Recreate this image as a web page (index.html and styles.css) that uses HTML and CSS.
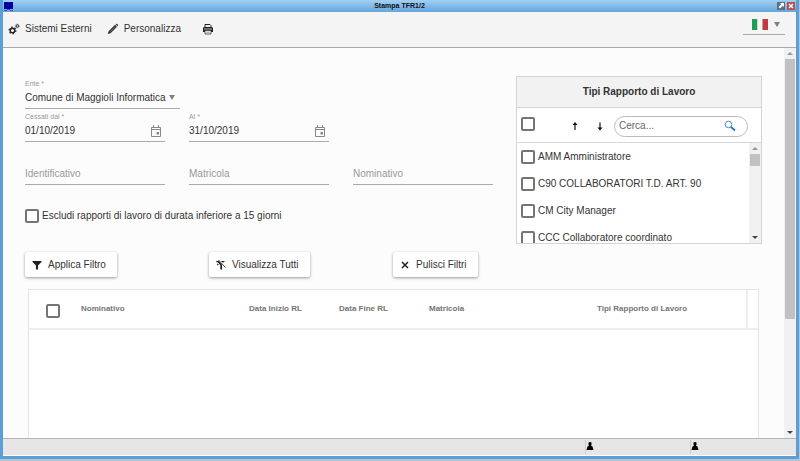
FILE: index.html
```html
<!DOCTYPE html>
<html lang="it">
<head>
<meta charset="utf-8">
<meta name="viewport" content="width=device-width, initial-scale=1">
<title>Stampa TFR1/2</title>
<link rel="stylesheet" href="styles.css">
</head>
<body>
<div class="window">
  <header class="titlebar">
    <svg class="app-icon" viewBox="0 0 9 9" aria-hidden="true"><path fill="#00009c" d="M0 0h4l.5.5L5 0h4v7H0z"/><path fill="#4a4ab8" d="M0 8h3v1H0zM3 7h3v1H3zM6 8h3v1H6z"/></svg>
    <h1>Stampa TFR1/2</h1>
    <div class="window-controls">
      <button type="button" class="win-btn" aria-label="Ingrandisci"><svg viewBox="0 0 8 8"><path fill="#fff" d="M3 1h4v4L5.800 3.800 3 6.500 1.500 5l2.700-2.700z"/></svg></button>
      <button type="button" class="win-btn win-close" aria-label="Chiudi"><svg viewBox="0 0 8 8"><path fill="none" stroke="#fff" stroke-width="1.500" d="M2 2l4 4M6 2L2 6"/></svg></button>
    </div>
  </header>

  <nav class="toolbar">
    <button type="button" class="tool">
      <svg viewBox="0 0 12 12" aria-hidden="true"><circle cx="4.500" cy="7.500" r="2.300" fill="none" stroke="#222" stroke-width="1.500"/><circle cx="4.500" cy="7.500" r="3.400" fill="none" stroke="#222" stroke-width="1.200" stroke-dasharray="1.500 2.060"/><circle cx="9.300" cy="3" r="1.200" fill="none" stroke="#333" stroke-width="1"/><circle cx="9.300" cy="3" r="2" fill="none" stroke="#333" stroke-width=".7" stroke-dasharray=".8 .77"/></svg>
      Sistemi Esterni
    </button>
    <button type="button" class="tool">
      <svg viewBox="0 0 12 12" aria-hidden="true"><path fill="#333" d="M.8 11l.8-2.800L8 1.800 10 3.800 3.600 10.200zM8.600 1.300l.7-.6c.5-.4 2.300 1.300 1.900 1.900l-.7.700z"/><path stroke="#999" stroke-width=".6" d="M3 8.800l5.200-5.200"/></svg>
      Personalizza
    </button>
    <button type="button" class="tool tool-print" aria-label="Stampa">
      <svg viewBox="0 0 12 12" aria-hidden="true"><path fill="#eee" stroke="#222" d="M3 4.500v-3h5l1 1v2"/><path fill="#222" d="M2 4h8l1 1v4H1V5z"/><path fill="#bbb" d="M2 5.500h8v1H2z"/><path fill="#fff" stroke="#333" stroke-width=".8" d="M3 7.500h6V11H3z"/><path stroke="#777" stroke-width=".7" d="M4 9.200h4"/></svg>
    </button>
    <button type="button" class="language" aria-label="Italiano">
      <svg class="flag" viewBox="0 0 16 11" aria-hidden="true"><path fill="#239b56" d="M0 0h5.500v11H0z"/><path fill="#f4f4f4" d="M5.500 0h5v11h-5z"/><path fill="#c03a41" d="M10.500 0H16v11h-5.500z"/></svg>
      <span class="caret"></span>
    </button>
  </nav>

  <div class="viewport">
    <main class="content">
      <div class="filters">
        <form class="form" id="filters">
          <div class="field field-select">
            <label for="ente">Ente *</label>
            <select id="ente"><option>Comune di Maggioli Informatica</option></select>
          </div>
          <div class="field">
            <label for="dal">Cessati dal *</label>
            <div class="date">
              <input id="dal" type="text" value="01/10/2019">
              <svg viewBox="0 0 12 12" aria-hidden="true"><path fill="none" stroke="#888" d="M1.500 2.500h9v9h-9z"/><path fill="#888" d="M1 4h10v1H1zM3 0h1v3H3zM8 0h1v3H8zM6.500 7H9v2.500H6.500z"/></svg>
            </div>
          </div>
          <div class="field">
            <label for="al">Al *</label>
            <div class="date">
              <input id="al" type="text" value="31/10/2019">
              <svg viewBox="0 0 12 12" aria-hidden="true"><path fill="none" stroke="#888" d="M1.500 2.500h9v9h-9z"/><path fill="#888" d="M1 4h10v1H1zM3 0h1v3H3zM8 0h1v3H8zM6.500 7H9v2.500H6.500z"/></svg>
            </div>
          </div>
          <div class="field first"><input type="text" aria-label="Identificativo" placeholder="Identificativo"></div>
          <div class="field"><input type="text" aria-label="Matricola" placeholder="Matricola"></div>
          <div class="field"><input type="text" aria-label="Nominativo" placeholder="Nominativo"></div>
          <label class="check exclude"><input type="checkbox">Escludi rapporti di lavoro di durata inferiore a 15 giorni</label>
        </form>

        <section class="picker">
          <h2>Tipi Rapporto di Lavoro</h2>
          <div class="picker-tools">
            <input type="checkbox" aria-label="Seleziona tutti">
            <button type="button" class="arrow" aria-label="Ordine crescente"><svg viewBox="0 0 8 10"><path fill="#111" d="M4 1l2.500 3H4.600v5H3.400V4H1.500z"/></svg></button>
            <button type="button" class="arrow" aria-label="Ordine decrescente"><svg viewBox="0 0 8 10"><path fill="#111" d="M4 9.500l2.500-3H4.600v-5H3.400v5H1.500z"/></svg></button>
            <div class="search">
              <input type="text" aria-label="Cerca" placeholder="Cerca...">
              <svg viewBox="0 0 12 12" aria-hidden="true"><circle cx="4.500" cy="4.500" r="3.300" fill="none" stroke="#4a90d9"/><path stroke="#1f73d0" stroke-width="1.800" d="M7 7l4 3.500"/></svg>
            </div>
          </div>
          <div class="picker-body">
            <div class="picker-list">
              <label class="check"><input type="checkbox">AMM Amministratore</label>
              <label class="check"><input type="checkbox">C90 COLLABORATORI T.D. ART. 90</label>
              <label class="check"><input type="checkbox">CM City Manager</label>
              <label class="check"><input type="checkbox">CCC Collaboratore coordinato</label>
            </div>
            <div class="scrollbar" aria-hidden="true"><i class="up"></i><b class="thumb"></b><i class="down"></i></div>
          </div>
        </section>
      </div>

      <div class="actions">
        <div><button type="submit" form="filters" class="action"><svg viewBox="0 0 10 10" aria-hidden="true"><path fill="#222" d="M.5 1h9v1L6 5.500V9.500H4V5.500L.5 2z"/></svg>Applica Filtro</button></div>
        <div><button type="button" class="action"><svg viewBox="0 0 10 10" aria-hidden="true"><path fill="#222" d="M.3 1H3l3 3.800v4.700H4.300V5.300L1.800 2.200H.3zM4.800 1H9L7 2.800zM.8 4.600l1-1 .9.900-1 1z"/><path stroke="#333" stroke-width=".9" d="M2.500 0l7 7.500"/></svg>Visualizza Tutti</button></div>
        <div><button type="reset" form="filters" class="action"><svg viewBox="0 0 10 10" aria-hidden="true"><path stroke="#222" stroke-width="1.500" d="M2 2l6 6M8 2L2 8"/></svg>Pulisci Filtri</button></div>
      </div>

      <div class="results">
        <table>
          <colgroup><col class="c-check"><col class="c-name"><col class="c-date"><col class="c-date"><col class="c-code"><col><col class="c-end"></colgroup>
          <thead>
            <tr>
              <th class="th-check"><input type="checkbox" aria-label="Seleziona tutte le righe"></th>
              <th>Nominativo</th><th>Data Inizio RL</th><th>Data Fine RL</th><th>Matricola</th><th>Tipi Rapporto di Lavoro</th>
              <td class="th-end"></td>
            </tr>
          </thead>
        </table>
      </div>
    </main>
    <div class="scrollbar" aria-hidden="true"><i class="up"></i><b class="thumb"></b><i class="down"></i></div>
  </div>

  <footer class="status">
    <span></span>
    <span class="slot"><svg viewBox="0 0 8 8" aria-hidden="true"><path d="M2.500.5L4 0l1.500.5v2.300L5 3.800l1.500.7L7.500 8H.5l1-3.500L3 3.800l-.5-1z"/></svg></span>
    <span class="slot"><svg viewBox="0 0 8 8" aria-hidden="true"><path d="M2.500.5L4 0l1.500.5v2.300L5 3.800l1.500.7L7.500 8H.5l1-3.500L3 3.800l-.5-1z"/></svg></span>
  </footer>
</div>
</body>
</html>
```
FILE: styles.css
```css
* { box-sizing: border-box; }

body {
  margin: 0;
  padding: 0 1px 2px 0;
  background: #b9c3cc;
  color: #333;
  font: 10px/12px "Liberation Sans", Arial, sans-serif;
}

button, input, select { font: inherit; color: inherit; }
button { border: 0; background: none; padding: 0; }
svg { display: block; flex: none; }

.window {
  display: flex;
  flex-direction: column;
  height: calc(100vh - 2px);
  border: solid #5b9fd8;
  border-width: 0 3px 3px;
  background: #fcfcfc;
}

/* Title bar */
.titlebar {
  display: grid;
  grid-template-columns: 1fr auto 1fr;
  align-items: center;
  flex: none;
  height: 12px;
  background: linear-gradient(#a3d0f4, #64a5dc);
}
.app-icon { width: 9px; height: 9px; margin-left: 1px; }
.titlebar h1 { margin: 0; font-size: 7px; line-height: 10px; color: #111; }
.window-controls { display: flex; justify-content: flex-end; gap: 2px; padding-right: 1px; }
.win-btn { width: 8px; height: 8px; background: #5c6e87; }
.win-close { background: #b64f50; }

/* Toolbar */
.toolbar {
  display: flex;
  align-items: center;
  flex: none;
  height: 36px;
  padding: 0 11px 2px 5px;
  background: #f4f4f4;
  border-bottom: 1px solid #aaa;
}
.tool { display: flex; align-items: center; gap: 5px; margin-right: 15px; }
.tool svg { width: 12px; height: 12px; }
.tool-print { margin-left: 6px; }
.language {
  display: flex;
  align-items: center;
  gap: 6px;
  width: 42px;
  height: 24px;
  margin: 0 0 12px auto;
  padding: 4px 0 0 9px;
  border-bottom: 1px solid #aaa;
}
.flag { width: 16px; height: 11px; }
.caret { border: 3px solid transparent; border-top: 5px solid #808080; border-bottom: 0; }

/* Scrolling area */
.viewport { display: flex; flex: 1; min-height: 0; }
.content {
  display: flex;
  flex-direction: column;
  flex: 1;
  min-width: 0;
  padding: 28px 22px 0;
}

.scrollbar {
  display: flex;
  flex-direction: column;
  align-items: center;
  flex: none;
  width: 12px;
  padding: 4px 1px;
  background: #f1f1f1;
}
.scrollbar i { border: 3px solid transparent; }
.scrollbar .up { border-top: 0; border-bottom-color: #999; }
.scrollbar .down { margin-top: auto; border-bottom: 0; border-top-color: #444; }
.scrollbar .thumb { width: 100%; margin-top: 4px; height: 260px; background: #c1c1c1; }

/* Filter form */
.filters { display: flex; gap: 23px; }
.form {
  display: grid;
  flex: 1;
  grid-template-columns: repeat(3, minmax(0, 1fr));
  grid-template-rows: 33px 33px 43px 1fr;
  column-gap: 24px;
}
.field { display: flex; flex-direction: column; justify-content: flex-end; border-bottom: 1px solid #aaa; }
.field label { font-size: 7px; line-height: 8px; color: #999; }
.field input, .field select {
  width: 100%;
  min-width: 0;
  height: 20px;
  padding: 0 0 1px;
  border: 0;
  background: none;
  outline: 0;
}
.field-select { position: relative; grid-column: 1 / 3; justify-self: start; width: 155px; }
.field-select select { appearance: none; }
.field-select::after {
  content: "";
  position: absolute;
  right: 5px;
  bottom: 8px;
  border: 3px solid transparent;
  border-top: 5px solid #808080;
  border-bottom: 0;
}
.field:nth-child(2), .field.first { grid-column: 1; }
.date { display: flex; align-items: center; padding-right: 3px; }
.date svg { width: 12px; height: 12px; }
::placeholder { color: #999; opacity: 1; }

.check { display: flex; align-items: center; gap: 3px; }
input[type="checkbox"] {
  appearance: none;
  flex: none;
  width: 14px;
  height: 14px;
  margin: 0;
  border: 2px solid #757575;
  border-radius: 2px;
  background: #fff;
}
input[type="checkbox"]:checked { background: #757575; }
.exclude { grid-column: 1 / 4; align-self: start; margin-top: 24px; }

/* Contract type picker */
.picker { flex: none; width: 246px; border: 1px solid #d5d5d5; background: #fff; }
.picker h2 {
  margin: 0;
  background: #f2f2f2;
  border-bottom: 1px solid #d8d8d8;
  font-size: 10px;
  line-height: 30px;
  text-align: center;
}
.picker-tools {
  display: flex;
  align-items: center;
  height: 35px;
  padding: 2px 13px 0 4px;
  border-bottom: 1px solid #d8d8d8;
}
.picker-tools > input { margin: 0 36px 4px 0; }
.arrow { width: 8px; margin-right: 17px; }
.arrow svg { width: 8px; height: 10px; }
.arrow + .arrow { margin-right: 10px; }
.search {
  display: flex;
  align-items: center;
  flex: 1;
  min-width: 0;
  height: 21px;
  padding: 0 11px 0 4px;
  border: 1px solid #bbb;
  border-radius: 11px;
}
.search input { flex: 1; min-width: 0; padding: 0; border: 0; background: none; outline: 0; }
.search ::placeholder { color: #666; }
.search svg { width: 12px; height: 12px; }
.picker-body { display: flex; height: 100px; }
.picker-list {
  display: flex;
  flex-direction: column;
  gap: 13px;
  flex: 1;
  overflow: hidden;
  padding: 7px 0 0 4px;
}
.picker-list .check { flex: none; height: 14px; }
.picker-body .thumb { height: 12px; }

/* Actions */
.actions { display: grid; grid-template-columns: repeat(4, 184px); margin-top: 8px; }
.action {
  display: flex;
  align-items: center;
  gap: 6px;
  height: 25px;
  padding: 0 11px 0 7px;
  border-radius: 2px;
  background: #fff;
  box-shadow: 0 1px 3px rgba(0, 0, 0, .4);
}
.action svg { width: 10px; height: 10px; }

/* Results */
.results { flex: 1; margin: 12px 3px 0; border: 1px solid #e4e4e4; border-bottom: 0; background: #fff; }
.results table { width: 100%; table-layout: fixed; border-collapse: collapse; }
.results th, .results td { height: 39px; padding: 0; border-bottom: 2px solid #eee; text-align: left; }
.results th { font-size: 8px; color: #757575; }
.results .th-check { padding: 4px 0 0 17px; }
.th-check input { display: block; }
.results .th-end { border-left: 2px solid #eee; }
.c-check { width: 52px; }
.c-name, .c-code { width: 168px; }
.c-date { width: 90px; }
.c-end { width: 11px; }

/* Status bar */
.status {
  display: grid;
  grid-template-columns: 1fr 105px 105px;
  flex: none;
  height: 18px;
  padding: 1px 1px 1px 0;
  border-top: 1px solid #b5b5b5;
  border-bottom: 1px solid #fff;
  background: #e7e5e5;
}
.slot { padding: 2px 0; border-left: 1px solid #ccc; }
.slot svg { width: 8px; height: 8px; }
```
